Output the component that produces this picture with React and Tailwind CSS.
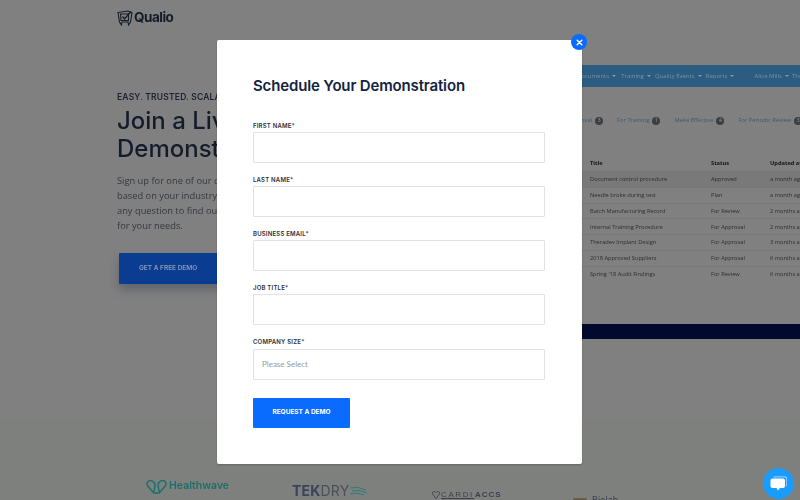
const inter = '[font-family:Inter,"Liberation_Sans",sans-serif]';

const rows = [
  ['Document control procedure', 'Approved', 'a month ago'],
  ['Needle broke during test', 'Plan', 'a month ago'],
  ['Batch Manufacturing Record', 'For Review', '2 months ago'],
  ['Internal Training Procedure', 'For Approval', '2 months ago'],
  ['Theradev Implant Design', 'For Approval', '3 months ago'],
  ['2018 Approved Suppliers', 'For Approval', '6 months ago'],
  ["Spring '18 Audit Findings", 'For Review', '6 months ago'],
];

function Caret() {
  return <span className="ml-[3px] inline-block align-middle border-x-[2px] border-t-[2px] border-x-transparent border-t-[#7f9cb1]" />;
}

function Badge({ n }) {
  return <span className="ml-[3px] inline-flex h-[8px] w-[8px] items-center justify-center rounded-full bg-[#3c3f42] text-[5px] text-[#999]">{n}</span>;
}

function Field({ label, select }) {
  return (
    <div className="flex flex-col">
      <label className={`${inter} h-[7px] text-[6px] leading-[7px] font-semibold tracking-[0.2px] text-[#2b3038] uppercase`}>{label}*</label>
      {select ? (
        <div className="mt-[4px] flex h-[31px] items-center rounded-[1px] border border-[#dfe2e6] bg-white pb-[1px] pl-[8px] font-['Lato',sans-serif] text-[8px] text-[#979a9f]">Please Select</div>
      ) : (
        <input className="mt-[3px] h-[31px] rounded-[1px] border border-[#dfe2e6] bg-white" />
      )}
    </div>
  );
}

export default function App() {
  return (
    <div className="relative h-[500px] w-[800px] overflow-hidden bg-[#808080]">
      <div className="flex h-full flex-col blur-[0.4px]">
        <header className="flex h-[36px] items-center gap-[1px] pl-[117px]">
          <svg width="16" height="16" viewBox="0 0 16 16" fill="none" stroke="#161c28" strokeWidth="1.1">
            <path d="M1 2.5 L11 1 L15 2.5 L13.5 12 L11.5 15 L11 12 L5 12 L4.5 15 L2.5 12 Z" />
            <path d="M3.5 4 H11.5 V10.5 H4 Z" />
            <path d="M5.5 6.5 L7.5 9 L14 1.5" strokeWidth="1.4" />
          </svg>
          <span className={`${inter} text-[13.5px] leading-none font-bold tracking-[-0.5px] text-[#141a27]`}>Qualio</span>
        </header>

        <main className="flex h-[384px]">
          <section className="w-[540px] shrink-0 pt-[55px] pl-[117px]">
            <p className={`${inter} text-[8.5px] leading-[12px] font-semibold tracking-[0.2px] whitespace-nowrap text-[#1c2230]`}>EASY. TRUSTED. SCALABLE.</p>
            <h1 className={`${inter} mt-[4px] text-[24px] leading-[28px] font-medium whitespace-nowrap text-[#141b2b]`}>
              Join a Live<br />Demonstration
            </h1>
            <p className="mt-[10px] w-[200px] font-['Open_Sans',sans-serif] text-[9.3px] leading-[15px] whitespace-nowrap text-[#33373f]">
              Sign up for one of our demos<br />based on your industry. Ask<br />any question to find out more<br />for your needs.
            </p>
            <div className={`${inter} mt-[20px] ml-[2px] flex h-[31px] w-[130px] items-center pl-[20px] rounded-[1px] bg-[#0a3d91] text-[6.5px] font-semibold text-[#8c9ab8] shadow-[0_6px_10px_rgba(40,50,70,0.35)]`}>
              GET A FREE DEMO
            </div>
          </section>

          <section className="min-w-0 flex-1 pt-[29px] font-['Open_Sans',sans-serif]">
            <nav className="flex h-[22px] items-center bg-[#2c5c80] pl-[37px] text-[6px] whitespace-nowrap text-[#7791a4]">
              <span className="shrink-0">Documents<Caret /></span>
              <span className="ml-[5px] shrink-0">Training<Caret /></span>
              <span className="ml-[4px] shrink-0">Quality Events<Caret /></span>
              <span className="ml-[4px] shrink-0">Reports<Caret /></span>
              <span className="ml-[20px] shrink-0">Alice Mills<Caret /></span>
              <span className="ml-[3px] shrink-0">The</span>
            </nav>
            <div className="mt-[29px] flex h-[9px] items-center pl-[41px] text-[5.8px] whitespace-nowrap text-[#3d5a72]">
              <span className="shrink-0">oval<Badge n="3" /></span>
              <span className="ml-[14px] shrink-0">For Training<Badge n="1" /></span>
              <span className="ml-[14px] shrink-0">Make Effective<Badge n="4" /></span>
              <span className="ml-[14px] shrink-0">For Periodic Review<Badge n="3" /></span>
            </div>
            <div className="mt-[31px] ml-[42px] flex flex-col text-[5.7px] whitespace-nowrap text-[#2a2d31]">
              <div className="flex h-[15px] items-center pl-[8px] font-bold text-[#121417]">
                <span className="w-[121px] shrink-0">Title</span>
                <span className="w-[59px] shrink-0">Status</span>
                <span className="shrink-0">Updated at</span>
              </div>
              {rows.map((r, i) => (
                <div key={r[0]} className={`flex h-[15.8px] items-center border-t border-[#777777] pl-[8px] ${i === 0 ? 'bg-[#797979]' : ''}`}>
                  <span className="w-[121px] shrink-0">{r[0]}</span>
                  <span className="w-[59px] shrink-0">{r[1]}</span>
                  <span className="shrink-0">{r[2]}</span>
                </div>
              ))}
            </div>
            <div className="mt-[42px] ml-[42px] h-[15px] bg-[#010a2c]" />
          </section>
        </main>

        <footer className="relative flex-1 bg-[#7e807e]">
          <div className="absolute top-[59px] left-[146px] flex items-center gap-[2px]">
            <svg width="21" height="15" viewBox="0 0 23 15" fill="none" stroke="#1d6f69" strokeWidth="1.6">
              <path d="M8 14 L2 7 C0 4 2 1 5 1 C7 1 8 2 9.5 4 C10 7 10 10 8 14Z" />
              <path d="M15 14 L21 7 C23 4 21 1 18 1 C16 1 15 2 13.5 4 C13 7 13 10 15 14Z" />
              <path d="M8 14 Q11.5 16 15 14" />
            </svg>
            <span className={`${inter} text-[10.5px] leading-none font-semibold text-[#1d6f69]`}>Healthwave</span>
          </div>
          <div className={`${inter} absolute top-[64px] left-[292px] flex items-center text-[14px] leading-[14px] font-bold tracking-[0.2px] text-[#38435c]`}>
            TEK<span className="font-normal text-[#4a5056]">DRY</span>
            <svg width="18" height="10" viewBox="0 0 18 10" fill="none" stroke="#2f7a78" strokeWidth="1" className="ml-[1px]">
              <path d="M0 2 Q8 0 16 4 M2 5 Q9 3 17 7 M0 8 Q8 6 14 9" />
            </svg>
          </div>
          <div className="absolute top-[70px] left-[432px] flex items-center gap-[1px] font-['Liberation_Sans',sans-serif] text-[8px] leading-[10px] text-[#3a3f4c]">
            <svg width="8" height="8" viewBox="0 0 8 8" fill="none" stroke="#3a3f4c" strokeWidth="0.8">
              <path d="M4 7.5 L0.6 3 C0 1.5 1 0.5 2.2 0.5 C3 0.5 3.6 1 4 1.6 C4.4 1 5 0.5 5.8 0.5 C7 0.5 8 1.5 7.4 3 Z" />
            </svg>
            <span className="tracking-[1.6px] underline">CARDI</span>
            <span className="font-bold tracking-[1px]">ACCS</span>
          </div>
          <div className="absolute top-[75px] left-[573px] flex items-start gap-[5px]">
            <span className="mt-[3px] h-[4px] w-[14px] rounded-t-[2px] bg-[#6f5a44]" />
            <span className={`${inter} text-[9px] leading-[10px] text-[#3a3f4c]`}>Biolab</span>
          </div>
        </footer>
      </div>

      <div className="absolute top-[40px] left-[217px] flex h-[424px] w-[365px] flex-col rounded-[2px] bg-white pt-[36px] pl-[36px] shadow-[0_1px_2px_rgba(0,0,0,0.2)]">
        <h2 className={`${inter} text-[15px] leading-[20px] font-semibold tracking-[-0.15px] text-[#14233f]`}>Schedule Your Demonstration</h2>
        <form className="mt-[26px] flex w-[292px] flex-col gap-[13px]">
          <Field label="First Name" />
          <Field label="Last Name" />
          <Field label="Business Email" />
          <Field label="Job Title" />
          <Field label="Company Size" select />
          <button type="button" className={`${inter} mt-[5px] h-[30px] w-[97px] rounded-[1px] bg-[#0a6cff] text-[6.5px] font-bold text-white`}>REQUEST A DEMO</button>
        </form>
        <button type="button" aria-label="Close" className="absolute -top-[6px] -right-[5px] flex h-[16px] w-[16px] items-center justify-center rounded-full bg-[#0a6cff]">
          <svg width="7" height="7" viewBox="0 0 7 7" stroke="white" strokeWidth="1.5" strokeLinecap="round"><path d="M1.2 1.2 L5.8 5.8 M5.8 1.2 L1.2 5.8" /></svg>
        </button>
      </div>

      <button type="button" aria-label="Chat" className="absolute top-[468px] left-[763px] flex h-[31px] w-[31px] items-center justify-center rounded-full bg-[#1a9cff]">
        <svg width="18" height="17" viewBox="0 0 18 17" fill="white">
          <path d="M4 1.5 H15 C16.2 1.5 17 2.3 17 3.5 V10.5 C17 11 16.8 11.4 16.4 11.7 V4 C16.4 3 15.6 2.2 14.6 2.2 H3 C3.2 1.8 3.5 1.5 4 1.5Z" opacity="0.75" />
          <path d="M2.5 3.5 H13 C14.1 3.5 15 4.4 15 5.5 V11 C15 12.1 14.1 13 13 13 H10 L8 15.5 L6.5 13 H2.5 C1.4 13 0.5 12.1 0.5 11 V5.5 C0.5 4.4 1.4 3.5 2.5 3.5Z" />
        </svg>
      </button>
    </div>
  );
}
